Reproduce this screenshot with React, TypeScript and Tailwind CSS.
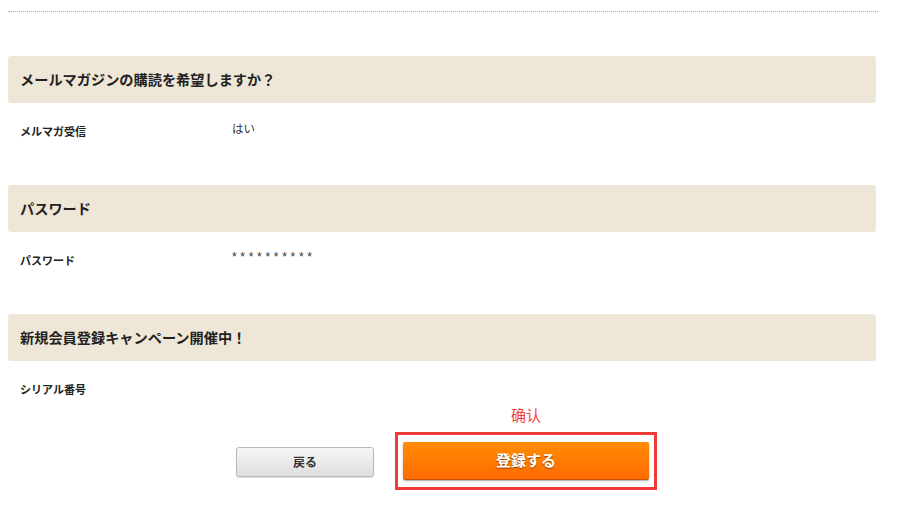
const jp = "font-['Noto_Sans_CJK_JP','Noto_Sans',sans-serif]";

const sections = [
  { title: 'メールマガジンの購読を希望しますか？', label: 'メルマガ受信', value: 'はい' },
  { title: 'パスワード', label: 'パスワード', value: '**********', mask: true },
  { title: '新規会員登録キャンペーン開催中！', label: 'シリアル番号', value: '' },
];

export default function App() {
  return (
    <div className={`min-h-screen w-[900px] bg-white text-[#222] ${jp}`}>
      <div className="ml-[8px] w-[870px] pt-[11px]">
        {/* dotted divider */}
        <div className="border-t border-dotted border-[#aaa]" />

        <div className="mt-[44px] w-[868px]">
          {sections.map((s, i) => (
            <div key={s.title}>
              {/* Section header */}
              <div className="flex h-[47px] items-center rounded-[3px] bg-[#eee6d6] px-[12px]">
                <h2 className="text-[14.2px] leading-none font-bold text-[#222]">{s.title}</h2>
              </div>
              {/* Row */}
              <div className={`flex pl-[12px] pt-[21px] ${i < sections.length - 1 ? 'h-[82px]' : 'h-[44px]'}`}>
                <div className="w-[212px] text-[11px] leading-[14px] font-bold text-[#222]">{s.label}</div>
                <div
                  className={
                    s.mask
                      ? "-mt-[3px] font-['Liberation_Sans',sans-serif] text-[12px] leading-[14px] tracking-[3.7px] text-[#333]"
                      : '-mt-[3px] text-[11.5px] leading-[14px] text-[#333]'
                  }
                >
                  {s.value}
                </div>
              </div>
            </div>
          ))}
        </div>

        {/* Buttons */}
        <div className="flex w-[868px] items-end justify-center pl-[9px]">
          <button className="mb-[13px] flex h-[30px] w-[138px] items-center justify-center rounded-[3px] border border-[#b9b9b9] bg-gradient-to-b from-[#f7f7f7] to-[#dedede] text-[12px] font-bold text-[#333] shadow-[0_1px_1px_rgba(0,0,0,0.15)]">
            戻る
          </button>
          <div className="ml-[21px] flex flex-col items-center">
            <span className="mb-[7px] font-['Noto_Sans_CJK_SC',sans-serif] text-[15px] leading-[20px] text-[#f23d3d]">
              确认
            </span>
            <div className="h-[58px] w-[262px] border-[3px] border-[#f03a3a] px-[5px] pt-[7px]">
              <button className="flex h-[38px] w-full items-center justify-center rounded-[2px] border-b border-[#c65200] bg-gradient-to-b from-[#ff8c05] to-[#ff6a00] text-[15px] font-bold text-white shadow-[0_1px_2px_rgba(0,0,0,0.35)] [text-shadow:0_1px_1px_rgba(0,0,0,0.45)]">
                登録する
              </button>
            </div>
          </div>
        </div>
      </div>
    </div>
  );
}
